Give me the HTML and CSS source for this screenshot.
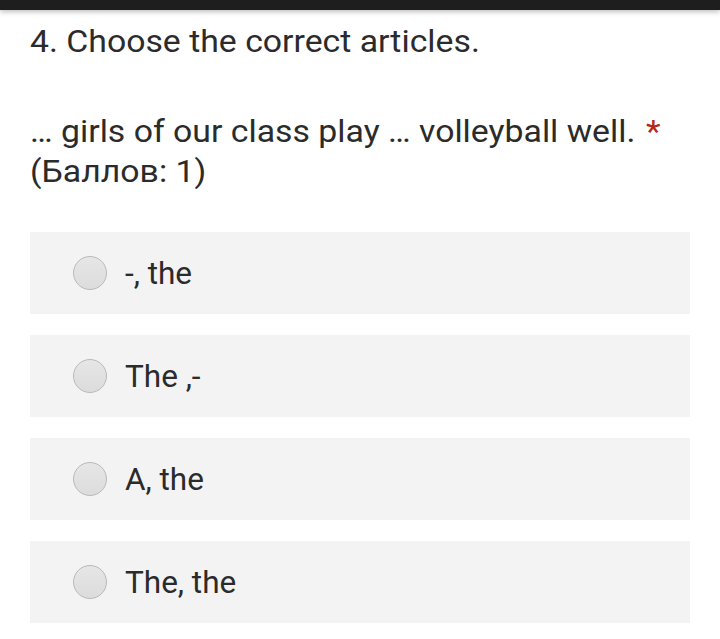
FILE: index.html
```html
<!DOCTYPE html>
<html lang="en">
<head>
<meta charset="utf-8">
<link rel="stylesheet" href="styles.css">
</head>
<body>
<div class="topbar"></div>
<main class="content">
  <h1 class="title">4. Choose the correct articles.</h1>
  <div class="question">… girls of our class play … volleyball well. <span class="req">*</span><br>(Баллов: 1)</div>
  <div class="options">
    <label class="option"><span class="radio"></span><span class="opt-text">-, the</span></label>
    <label class="option"><span class="radio"></span><span class="opt-text">The ,-</span></label>
    <label class="option"><span class="radio"></span><span class="opt-text">A, the</span></label>
    <label class="option"><span class="radio"></span><span class="opt-text">The, the</span></label>
  </div>
</main>
</body>
</html>
```
FILE: styles.css
```css
html, body {
  margin: 0;
  padding: 0;
  background: #ffffff;
}
body {
  font-family: Roboto, "Noto Sans", sans-serif;
  color: #2b2b2b;
  width: 720px;
  height: 639px;
  overflow: hidden;
}
.topbar {
  height: 10px;
  background: #1e1e1e;
  box-shadow: 0 2px 5px rgba(0,0,0,0.25);
}
.content {
  padding: 0 30px;
}
.title {
  margin: 0;
  padding-top: 14px;
  font-size: 31px;
  font-weight: 400;
  line-height: 36px;
  width: max-content;
  transform: scaleX(1.09);
  transform-origin: left center;
  white-space: nowrap;
}
.question {
  margin-top: 52px;
  font-size: 31px;
  line-height: 40px;
  width: max-content;
  transform: scaleX(1.09);
  transform-origin: left center;
  white-space: nowrap;
}
.req {
  color: #b3261e;
  margin-left: 2px;
}
.options {
  margin-top: 40px;
  display: flex;
  flex-direction: column;
  gap: 21px;
}
.option {
  height: 82px;
  background: #f3f3f3;
  display: flex;
  align-items: center;
  padding-left: 43px;
}
.radio {
  width: 32px;
  height: 32px;
  border-radius: 50%;
  border: 1px solid #b9b9b9;
  background: linear-gradient(#e6e6e6, #dcdcdc);
  flex: none;
}
.opt-text {
  margin-left: 18px;
  font-size: 31.5px;
}
```
